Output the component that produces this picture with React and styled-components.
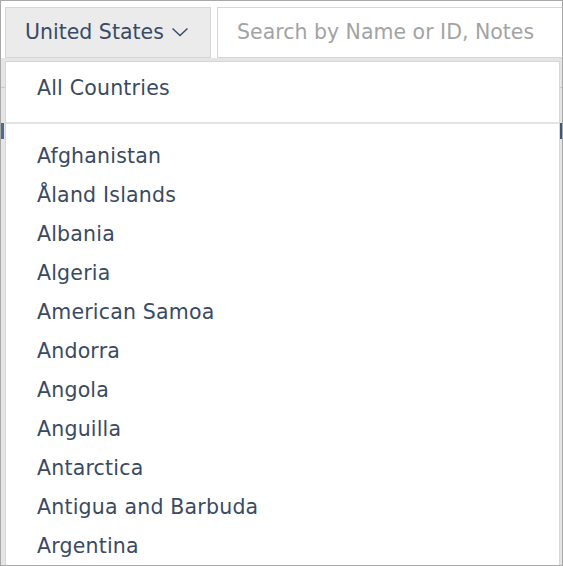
import React from "react";
import styled, { createGlobalStyle } from "styled-components";

const Global = createGlobalStyle`
  html, body { margin: 0; padding: 0; background: #fff; }
  * { box-sizing: border-box; }
`;

const Frame = styled.div`
  position: relative;
  width: 563px;
  height: 566px;
  border: 1px solid #a8a8a8;
  overflow: hidden;
  display: flex;
  flex-direction: column;
  font-family: "DejaVu Sans", Verdana, sans-serif;
  font-size: 20.5px;
  letter-spacing: 0.2px;
  color: #3a4a62;
  background: #fff;
`;

const Toolbar = styled.div`
  display: flex;
  gap: 6px;
  padding: 6px 0 0 4px;
  height: 57px;
  flex: none;
`;

const CountryButton = styled.button`
  width: 206px;
  height: 51px;
  flex: none;
  display: flex;
  align-items: center;
  gap: 7px;
  padding: 0 0 1px 19px;
  background: #ebebeb;
  border: 1px solid #d6d6d6;
  font: inherit;
  letter-spacing: 0;
  color: #3a4a62;
`;

const SearchInput = styled.input`
  flex: none;
  width: 360px;
  height: 51px;
  padding: 0 0 1px 19px;
  border: 1px solid #d6d6d6;
  font: inherit;
  letter-spacing: 0;
  color: #3a4a62;
  outline: none;
  &::placeholder { color: #a3a3a3; }
`;

const Content = styled.div`
  flex: 1;
  background: #e5e5e5;
  display: flex;
  flex-direction: column;
  padding-top: 29px;
`;

const TableLine = styled.div`
  height: 1px;
  background: #c9c9c9;
`;

const TableRow = styled.div`
  display: flex;
  justify-content: space-between;
  padding: 35px 0 0 0;
`;

const Mark = styled.div`
  width: ${p => p.$w}px;
  height: 16px;
  background: ${p => p.$c};
`;

const Menu = styled.div`
  position: absolute;
  left: 4px;
  top: 60px;
  width: 555px;
  height: 520px;
  background: #fff;
  border: 1px solid #d6d6d6;
  display: flex;
  flex-direction: column;
`;

const AllRow = styled.div`
  height: 62px;
  padding: 13px 0 0 31px;
  line-height: 26px;
  border-bottom: 2px solid #e4e4e4;
  flex: none;
`;

const List = styled.ul`
  list-style: none;
  margin: 0;
  padding: 12px 0 0 0;
`;

const Item = styled.li`
  height: 39px;
  display: flex;
  align-items: center;
  padding-left: 31px;
`;

const Chevron = () => (
  <svg width="18" height="12" viewBox="0 0 18 12" fill="none">
    <polyline points="1.5,2.5 9,9.5 16.5,2.5" stroke="#3a4a62" strokeWidth="1.4" />
  </svg>
);

const countries = [
  "Afghanistan", "Åland Islands", "Albania", "Algeria", "American Samoa",
  "Andorra", "Angola", "Anguilla", "Antarctica", "Antigua and Barbuda", "Argentina",
];

export default function App() {
  return (
    <>
      <Global />
      <Frame>
        <Toolbar>
          <CountryButton>
            United States <Chevron />
          </CountryButton>
          <SearchInput placeholder="Search by Name or ID, Notes" />
        </Toolbar>
        <Content>
          <TableLine />
          <TableRow>
            <Mark $w={3} $c="#4a6a8f" />
            <Mark $w={3} $c="#3a5a7a" />
          </TableRow>
        </Content>
        <Menu>
          <AllRow>All Countries</AllRow>
          <List>
            {countries.map(c => <Item key={c}>{c}</Item>)}
          </List>
        </Menu>
      </Frame>
    </>
  );
}
